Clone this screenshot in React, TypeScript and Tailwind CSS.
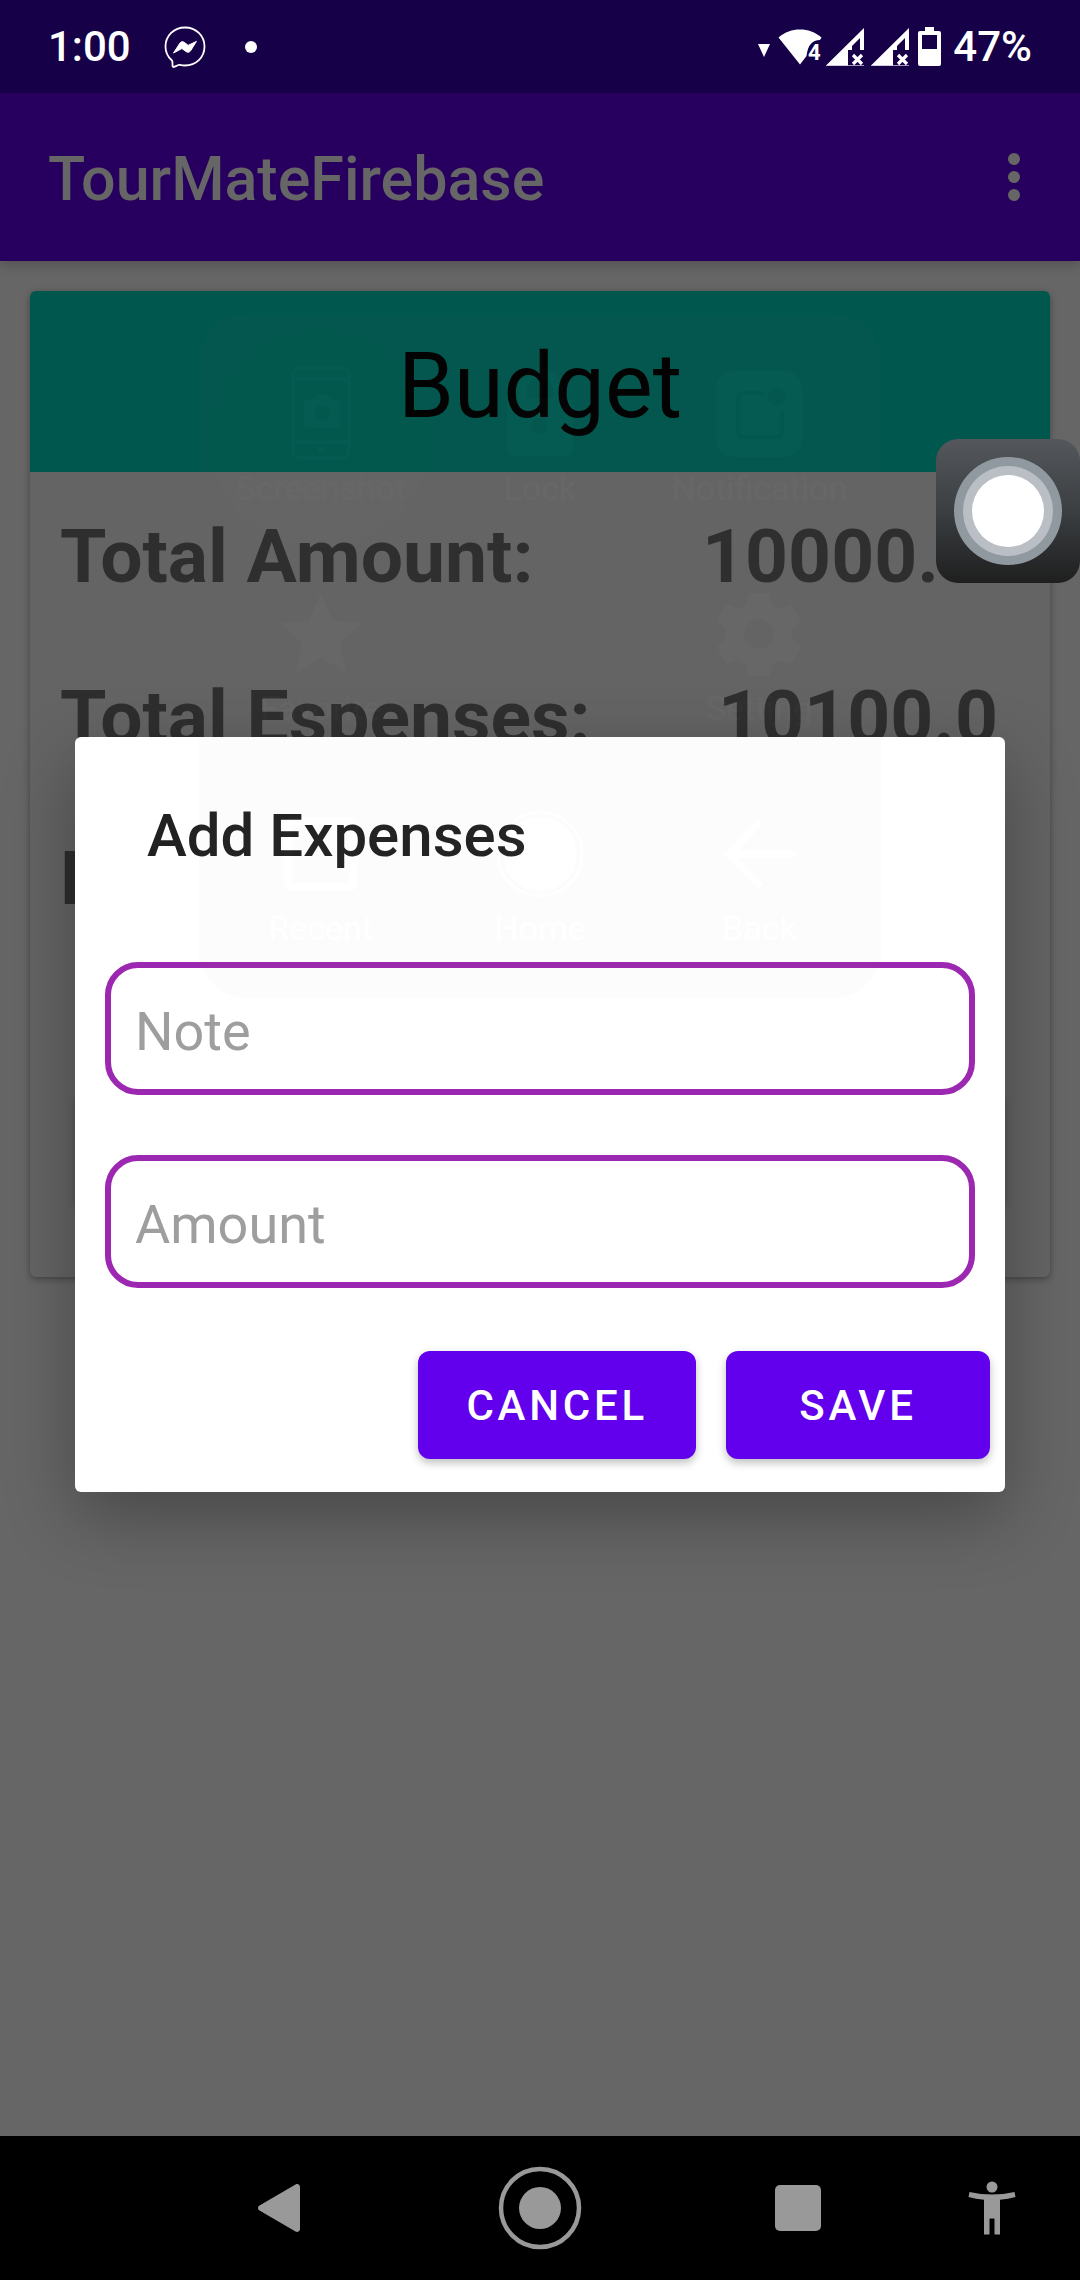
import type { ReactNode } from "react";

function MessengerIcon() {
  return (
    <svg viewBox="0 0 44 44" className="size-11" fill="none" aria-hidden="true">
      <path
        d="M22 2.500C11 2.500 2.500 10.600 2.500 21.500c0 5.900 2.300 10.300 6.200 13.700.6.500.7 1 .7 1.800l.2 3.900c0 .8.7 1.300 1.500 1l4.400-1.900c.5-.2.9-.2 1.400-.1 1.600.4 3.300.6 5.100.6 11 0 19.500-8.100 19.500-19S33 2.500 22 2.500Z"
        stroke="white"
        strokeWidth="1.800"
      />
      <path
        d="M10.500 28 17 18c1-1.400 2.800-1.700 4.100-.7l3.600 2.600c.4.300.9.300 1.300 0l7.400-3.500-5.900 9.500c-1 1.400-2.900 1.700-4.200.8l-3.900-2.800c-.4-.3-.9-.3-1.300 0Z"
        fill="white"
        stroke="white"
        strokeWidth="1"
        strokeLinejoin="round"
      />
    </svg>
  );
}

function WifiIcon() {
  return (
    <svg viewBox="0 0 44 38" className="h-[38px] w-11" aria-hidden="true">
      <path d="M0.500 9.500C7 4 14 1.500 22 1.500S37 4 43.500 9.500L42 12C34 12 30 17 28.500 28L22 36.500Z" fill="white" />
      <text x="30" y="32" fontSize="22" fontWeight="700" fill="white">
        4
      </text>
    </svg>
  );
}

function SignalIcon() {
  return (
    <svg viewBox="0 0 38 38" className="size-[38px]" aria-hidden="true">
      <path d="M0 37.500 38 0V22H34V10L26 18V22H22V37.500Z" fill="white" />
      <path d="M0 37.500H38" stroke="white" strokeWidth="1" opacity="0.6" />
      <path d="m27 27 9 9m0-9-9 9" stroke="white" strokeWidth="3.200" />
    </svg>
  );
}

function BatteryIcon() {
  return (
    <svg viewBox="0 0 23 39" className="h-[39px] w-[23px]" aria-hidden="true">
      <path
        fillRule="evenodd"
        d="M7 0h9v4h5a2 2 0 0 1 2 2v31a2 2 0 0 1-2 2H2a2 2 0 0 1-2-2V6a2 2 0 0 1 2-2h5ZM4 8v14h15V8Z"
        fill="white"
      />
    </svg>
  );
}

function StatusBar() {
  return (
    <header className="flex h-[93px] items-center justify-between bg-[#160047] px-12 text-[42px] leading-none font-medium text-white">
      <div className="flex items-center">
        <span>1:00</span>
        <span className="ml-8">
          <MessengerIcon />
        </span>
        <span className="ml-[38px] size-3 rounded-full bg-white" />
      </div>
      <div className="flex items-center">
        <svg viewBox="0 0 12 13" className="mt-2 mr-2 h-[13px] w-3" aria-hidden="true">
          <path d="M0 0h12L6 13Z" fill="white" />
        </svg>
        <WifiIcon />
        <span className="ml-1 flex gap-[7px]">
          <SignalIcon />
          <SignalIcon />
        </span>
        <span className="mr-3 ml-[9px]">
          <BatteryIcon />
        </span>
        <span>47%</span>
      </div>
    </header>
  );
}

function AppBar() {
  return (
    <div className="relative flex h-[168px] items-center justify-between bg-[#27005f] pr-10 pl-12 shadow-[0_4px_12px_rgba(0,0,0,0.2)]">
      <h1 className="pt-1 text-[61px] leading-[72px] font-medium text-[#666666]">TourMateFirebase</h1>
      <button type="button" aria-label="More options" className="flex w-[52px] flex-col items-center gap-1.5">
        <span className="size-3 rounded-full bg-[#666666]" />
        <span className="size-3 rounded-full bg-[#666666]" />
        <span className="size-3 rounded-full bg-[#666666]" />
      </button>
    </div>
  );
}

function BudgetCard() {
  return (
    <section className="mx-[30px] mt-[30px] overflow-hidden rounded-md bg-[#646464] pb-[69px] shadow-[0_2px_7px_rgba(0,0,0,0.35)]">
      <h2 className="bg-[#00574d] pt-[42px] pb-8 text-center text-[90px] leading-[107px] text-black">Budget</h2>
      <dl className="flex flex-col gap-[73px] pt-10 pr-[52px] pl-[30px] text-[75px] leading-[88px] font-bold text-[#2e2e2e]">
        <div className="flex justify-between">
          <dt>Total Amount:</dt>
          <dd className="pr-4">10000.0</dd>
        </div>
        <div className="flex justify-between">
          <dt>Total Espenses:</dt>
          <dd>10100.0</dd>
        </div>
        <div className="flex justify-between">
          <dt>Remaining:</dt>
        </div>
      </dl>
      <div className="px-[45px] pt-[170px]">
        <button
          type="button"
          aria-label="Add expenses"
          className="block h-[116px] w-full rounded-xl bg-[#27005f] shadow-[0_4px_8px_rgba(0,0,0,0.2)]"
        />
      </div>
    </section>
  );
}

function Field({ id, label }: { id: string; label: string }) {
  return (
    <input
      id={id}
      aria-label={label}
      placeholder={label}
      className="h-[133px] w-full rounded-[33px] border-[6px] border-[#9c27b0] bg-white px-6 pt-1.5 text-[54px] leading-[64px] text-[#212121] outline-none placeholder:text-[#9e9e9e] placeholder:opacity-100"
    />
  );
}

function DialogButton({ children }: { children: ReactNode }) {
  return (
    <button
      type="button"
      className="h-[108px] min-w-[264px] rounded-xl bg-[#6200ee] px-12 pt-0.5 text-[42px] leading-none font-medium tracking-[0.09em] text-white uppercase shadow-[0_4px_8px_rgba(0,0,0,0.25)]"
    >
      {children}
    </button>
  );
}

function AddExpensesDialog() {
  return (
    <div className="absolute inset-0 flex items-center px-[75px]">
      <form
        role="dialog"
        aria-labelledby="dialog-title"
        className="w-full rounded-md bg-white pt-16 pb-[33px] shadow-[0_24px_70px_rgba(0,0,0,0.3)]"
      >
        <h2 id="dialog-title" className="px-[72px] text-[60px] leading-[70px] font-medium text-[#212121]">
          Add Expenses
        </h2>
        <div className="mt-[91px] flex flex-col gap-[60px] px-[30px]">
          <Field id="note" label="Note" />
          <Field id="amount" label="Amount" />
        </div>
        <div className="mt-[63px] flex justify-end gap-[30px] pr-[15px]">
          <DialogButton>Cancel</DialogButton>
          <DialogButton>Save</DialogButton>
        </div>
      </form>
    </div>
  );
}

function MenuItem({ label, children }: { label: string; children: ReactNode }) {
  return (
    <div className="flex flex-col items-center justify-center gap-2.5 pt-2">
      <svg viewBox="0 0 86 86" className="size-[86px] overflow-visible" fill="white" aria-hidden="true">
        {children}
      </svg>
      <span>{label}</span>
    </div>
  );
}

/* Assistive touch panel at the very end of its fade-out. */
function FadingMenu() {
  return (
    <div className="pointer-events-none absolute inset-x-0 top-[221px] flex justify-center opacity-[0.02]">
      <div className="relative grid h-[684px] w-[682px] grid-cols-3 grid-rows-3 overflow-hidden rounded-[48px] bg-[#808080] p-3 text-[34px] leading-[42px] text-white">
        <span className="absolute top-4 left-3 size-[218px] rounded-full bg-[#a0a0a0]" />
        <div className="relative grid">
          <MenuItem label="Screenshot">
            <rect x="15" y="-3" width="56" height="90" rx="7" fill="none" stroke="white" strokeWidth="3" />
            <path d="M16 8h54M16 71h54" stroke="white" strokeWidth="3" />
            <path
              fillRule="evenodd"
              d="M26 29h8l4-5h12l4 5h5a3 3 0 0 1 3 3v22a3 3 0 0 1-3 3H29a3 3 0 0 1-3-3ZM44 34a8 8 0 1 0 0 16 8 8 0 0 0 0-16Z"
            />
            <circle cx="43" cy="79" r="3" />
          </MenuItem>
        </div>
        <MenuItem label="Lock">
          <path
            fillRule="evenodd"
            d="M20 27V20a23 23 0 0 1 46 0v7h4a6 6 0 0 1 6 6v46a6 6 0 0 1-6 6H16a6 6 0 0 1-6-6V33a6 6 0 0 1 6-6Zm10 0h26V20a13 13 0 0 0-26 0Zm12 20a8 8 0 1 0 0 16 8 8 0 0 0 0-16Z"
          />
        </MenuItem>
        <MenuItem label="Notification">
          <rect width="86" height="86" rx="18" />
          <path
            d="M49 22H27a5 5 0 0 0-5 5v34a5 5 0 0 0 5 5h34a5 5 0 0 0 5-5V39"
            fill="none"
            stroke="#808080"
            strokeWidth="4"
          />
          <circle cx="61" cy="26" r="9" fill="#808080" />
        </MenuItem>
        <MenuItem label="Favorite">
          <path d="m43 2 12 28 29 2-22 20 6 30-25-16-25 16 6-30L2 32l29-2Z" />
        </MenuItem>
        <span />
        <MenuItem label="Setting">
          <path
            fillRule="evenodd"
            d="M33 2h20l3 12 8 4 11-5 10 17-9 8v10l9 8-10 17-11-4-8 5-3 11H33l-3-11-8-5-11 4L1 56l9-8V38l-9-8 10-17 11 5 8-4ZM43 28a15 15 0 1 0 0 30 15 15 0 0 0 0-30Z"
          />
        </MenuItem>
        <MenuItem label="Recent">
          <rect x="10" y="10" width="66" height="66" rx="4" fill="none" stroke="white" strokeWidth="8" />
        </MenuItem>
        <MenuItem label="Home">
          <circle cx="43" cy="43" r="37" />
          <circle cx="43" cy="43" r="42" fill="none" stroke="white" strokeWidth="3" />
        </MenuItem>
        <MenuItem label="Back">
          <path d="M76 43H16M42 13 13 43l29 30" fill="none" stroke="white" strokeWidth="8" strokeLinecap="round" />
        </MenuItem>
      </div>
    </div>
  );
}

function AssistiveTouch() {
  return (
    <button
      type="button"
      aria-label="Assistive touch"
      className="absolute top-[346px] right-0 flex size-36 items-center justify-center rounded-[22px] bg-linear-to-b from-[#54585c] via-[#3b3f42] to-[#1f1f1f]"
    >
      <span className="flex size-[108px] items-center justify-center rounded-full bg-[#9199a0]">
        <span className="flex size-[90px] items-center justify-center rounded-full bg-[#b9bfc4]">
          <span className="size-[72px] rounded-full bg-white" />
        </span>
      </span>
    </button>
  );
}

function NavBar() {
  return (
    <nav className="grid h-36 grid-cols-[153fr_258fr_258fr_258fr_130fr_23fr] bg-black text-[#999999]">
      <span />
      <button type="button" aria-label="Back" className="flex items-center justify-center">
        <svg viewBox="0 0 48 48" className="size-12" fill="currentColor" aria-hidden="true">
          <path d="M1.500 21.500 37.500.5C39.500-.7 42 .7 42 3v42c0 2.300-2.500 3.700-4.500 2.500l-36-21c-2-1.200-2-3.800 0-5Z" />
        </svg>
      </button>
      <button type="button" aria-label="Home" className="flex items-center justify-center">
        <svg viewBox="0 0 84 84" className="size-[84px]" aria-hidden="true">
          <circle cx="42" cy="42" r="39" fill="none" stroke="currentColor" strokeWidth="4.500" />
          <circle cx="42" cy="42" r="21" fill="currentColor" />
        </svg>
      </button>
      <button type="button" aria-label="Recent apps" className="flex items-center justify-center">
        <span className="size-[46px] rounded-[5px] bg-[#999999]" />
      </button>
      <button type="button" aria-label="Accessibility" className="flex items-center justify-center">
        <svg viewBox="0 0 48 54" className="h-[54px] w-12" fill="currentColor" aria-hidden="true">
          <circle cx="24" cy="6" r="5.500" />
          <path d="M1.500 11Q24 16 46.500 11l1 5Q40 18 32 18.800V53.500H26.500V37.500h-5V53.500H16V18.800Q8 18 .5 16Z" />
        </svg>
      </button>
      <span />
    </nav>
  );
}

export default function App() {
  return (
    <div className="flex min-h-screen flex-col bg-[#666666] font-[Roboto,sans-serif]">
      <StatusBar />
      <main className="relative flex-1 overflow-hidden">
        <AppBar />
        <BudgetCard />
        <AddExpensesDialog />
        <FadingMenu />
        <AssistiveTouch />
      </main>
      <NavBar />
    </div>
  );
}
